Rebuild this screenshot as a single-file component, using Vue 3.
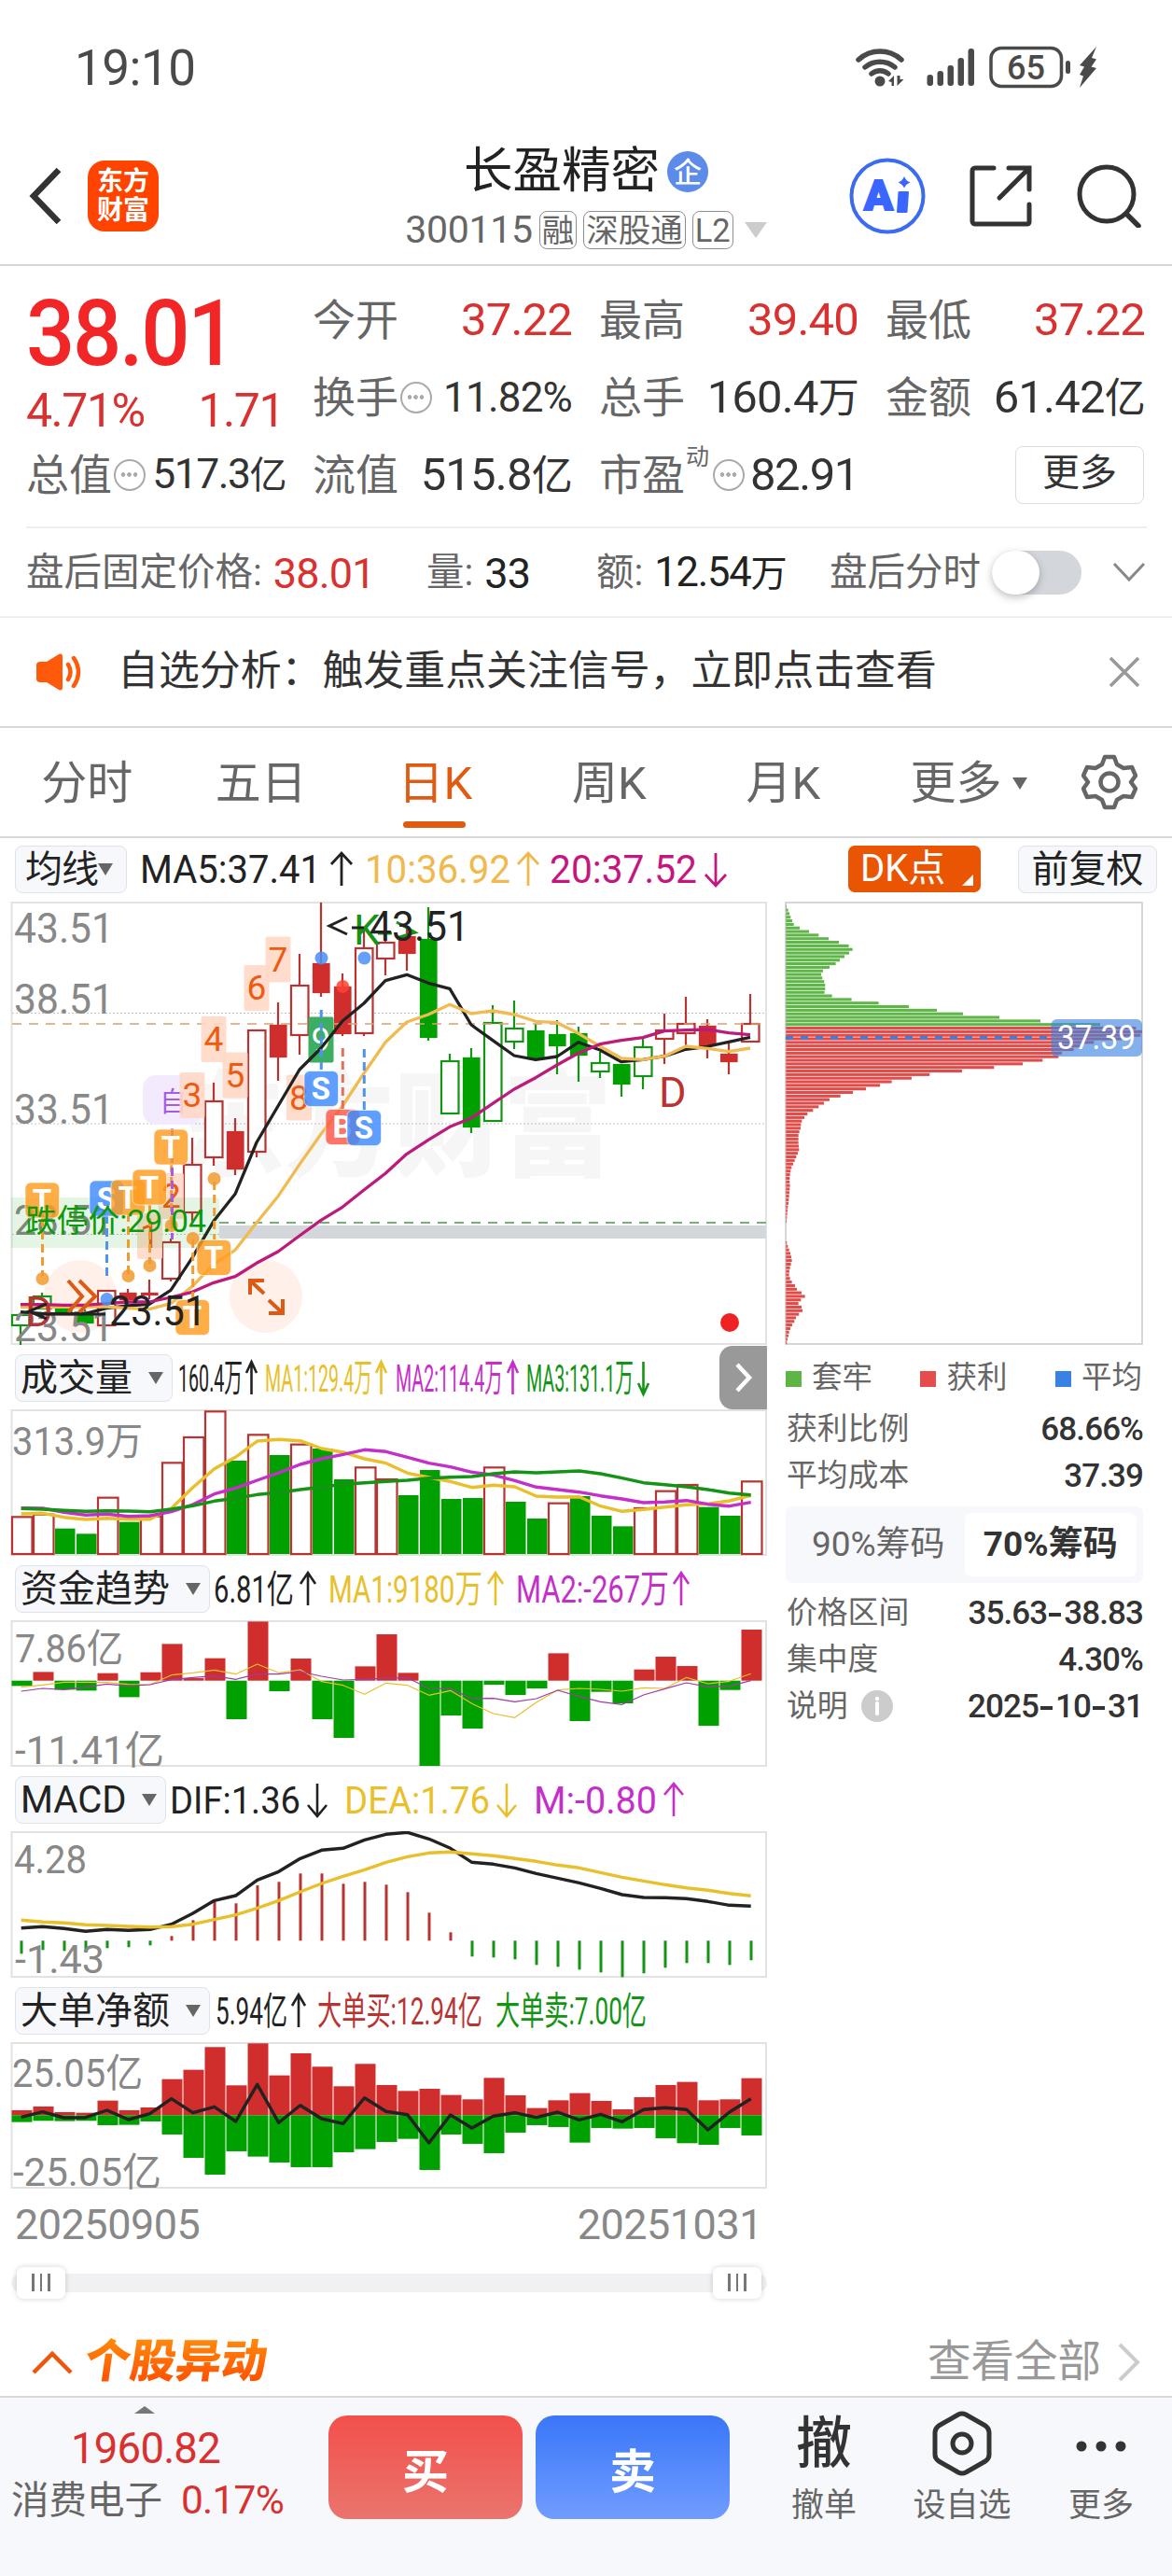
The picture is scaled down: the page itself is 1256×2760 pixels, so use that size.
<template>
  <div class="page">
    <div class="status">
      <span class="clock">19:10</span>
      <svg class="status-icons" viewBox="0 0 260 46" width="260" height="46">
        <g fill="none" stroke="#4a4a4a" stroke-width="5.5" stroke-linecap="round">
          <path d="M3 15a34 34 0 0 1 46 0" />
          <path d="M10 23a25 25 0 0 1 32 0" />
          <path d="M17 30a14 14 0 0 1 18 0" />
        </g>
        <circle cx="26" cy="38" r="5.5" fill="#4a4a4a" />
        <path d="M35 38l6-6v11h-2.500v-4zM44.500 32v11l7-7h-4v-4z" fill="#4a4a4a" />
        <g fill="#4a4a4a">
          <rect x="76.500" y="31" width="6.500" height="12" rx="3" />
          <rect x="87.500" y="27" width="6.500" height="16" rx="3" />
          <rect x="98.500" y="21" width="6.500" height="22" rx="3" />
          <rect x="109.500" y="13" width="6.500" height="30" rx="3" />
          <rect x="120.500" y="3" width="6.500" height="40" rx="3" />
        </g>
        <rect x="145" y="2.500" width="75.500" height="41" rx="11" fill="none" stroke="#4a4a4a" stroke-width="3.500" />
        <rect x="225" y="16" width="5" height="14" rx="2.500" fill="#4a4a4a" />
        <path d="M258 1l-18 20 5 1.500-5 8.500 4 1.500-4 12.500 18-21-5.500-1.500 5.500-8-5-1.500z" fill="#4a4a4a" />
        <text x="162" y="36" font-size="37" font-weight="500" fill="#4a4a4a" textLength="41" lengthAdjust="spacingAndGlyphs">65</text>
      </svg>
    </div>

    <header class="header">
      <div class="header-left">
        <svg width="36" height="64" viewBox="0 0 36 64"><path d="M32 4L5 32l27 28" fill="none" stroke="#333" stroke-width="6.500" /></svg>
        <div class="logo"><span>东方</span><span>财富</span></div>
      </div>
      <div class="header-title">
        <div class="name">长盈精密<span class="ent">企</span></div>
        <div class="code">
          <span class="num">300115</span>
          <span class="tag">融</span><span class="tag">深股通</span><span class="tag">L2</span>
          <i class="tri-down"></i>
        </div>
      </div>
      <div class="header-right">
        <svg width="82" height="82" viewBox="0 0 82 82">
          <circle cx="41" cy="41" r="38.500" fill="none" stroke="#3b6bf0" stroke-width="4" />
          <text x="16" y="56" font-size="45" font-weight="900" fill="#3a66ff" stroke="#3a66ff" stroke-width="2" textLength="31" lengthAdjust="spacingAndGlyphs">A</text>
          <path d="M53.500 37h9.500l-1.500 21h-9.500z" fill="#3a66ff" stroke="#3a66ff" stroke-width="2" stroke-linejoin="round" />
          <path d="M59 20q2 5 6.500 6.500q-4.500 1.500-6.500 6q-2-4.500-6.500-6q4.500-1.500 6.500-6.500z" fill="#3a66ff" />
        </svg>
        <svg width="68" height="66" viewBox="0 0 68 66">
          <path d="M26 3H6a3 3 0 0 0-3 3v54a3 3 0 0 0 3 3h56a2 2 0 0 0 2-2V42M42 3h22v23M63 4L32 35" fill="none" stroke="#333" stroke-width="5" stroke-linecap="round" />
        </svg>
        <svg width="70" height="68" viewBox="0 0 70 68">
          <circle cx="32" cy="32" r="29" fill="none" stroke="#333" stroke-width="5" />
          <path d="M53 53l13 13" stroke="#333" stroke-width="5.500" stroke-linecap="round" />
        </svg>
      </div>
    </header>

    <section class="quote">
      <div class="quote-col main-col">
        <div class="price"><span>38.01</span></div>
        <div class="change"><span>4.71%</span><span>1.71</span></div>
        <div class="cell"><label>总值</label><i class="more-dot"></i><b class="small">517.3<u>亿</u></b></div>
      </div>
      <div class="quote-col">
        <div class="cell"><label>今开</label><b class="red">37.22</b></div>
        <div class="cell"><label>换手</label><i class="more-dot"></i><b class="pct">11.82%</b></div>
        <div class="cell"><label>流值</label><b>515.8<u>亿</u></b></div>
      </div>
      <div class="quote-col">
        <div class="cell"><label>最高</label><b class="red">39.40</b></div>
        <div class="cell"><label>总手</label><b>160.4<u>万</u></b></div>
        <div class="cell"><label>市盈</label><sup>动</sup><i class="more-dot"></i><b class="pe">82.91</b></div>
      </div>
      <div class="quote-col">
        <div class="cell"><label>最低</label><b class="red">37.22</b></div>
        <div class="cell"><label>金额</label><b>61.42<u>亿</u></b></div>
        <div class="cell end"><button class="more-btn">更多</button></div>
      </div>
    </section>

    <section class="after">
      <div><label>盘后固定价格:</label><b class="red">38.01</b></div>
      <div><label>量:</label><b>33</b></div>
      <div><label>额:</label><b class="amount">12.54<u>万</u></b></div>
      <div><label>盘后分时</label></div>
      <div><span class="toggle"><i></i></span></div>
      <div><svg width="36" height="24" viewBox="0 0 36 24"><path d="M2 3l16 17L34 3" fill="none" stroke="#888" stroke-width="3" /></svg></div>
    </section>

    <section class="notice">
      <svg width="52" height="42" viewBox="0 0 52 42">
        <path d="M1 14a4 4 0 0 1 4-4h7L25 2q4-2 4 3v32q0 5-4 3l-13-8H5a4 4 0 0 1-4-4z" fill="#ff5a0a" />
        <path d="M35 13q5 8 0 16M41 6q10 15 0 30" fill="none" stroke="#ff5a0a" stroke-width="4.500" stroke-linecap="round" />
      </svg>
      <p>自选分析：触发重点关注信号，立即点击查看</p>
      <svg width="34" height="34" viewBox="0 0 34 34"><path d="M2 2l30 30M32 2L2 32" stroke="#999" stroke-width="3.500" /></svg>
    </section>

    <nav class="tabs">
      <span v-for="tab in tabs" :key="tab" class="tab" :class="{ active: tab === current }" @click="current = tab">{{ tab }}</span>
      <span class="tab tab-more">更多<i class="tri-small"></i></span>
      <svg width="60" height="60" viewBox="0 0 60 60" fill="none" stroke="#666" stroke-width="4.500" stroke-linejoin="round">
        <path d="M25 3h10l3 8 7 4 9-1 4 9-5 7 5 7-4 9-9-1-7 4-3 8H25l-3-8-7-4-9 1-4-9 5-7-5-7 4-9 9 1 7-4z" />
        <circle cx="30" cy="30" r="9.500" />
      </svg>
    </nav>

    <div class="ma-bar">
      <span class="pill ma-pill">均线<i class="tri-small"></i></span>
      <svg class="ma-text" width="640" height="50" viewBox="144 0 640 50">
        <g v-for="m in maLegend" :key="m.t">
          <text :x="m.x" y="40" font-size="42" :fill="m.c" :textLength="m.w" lengthAdjust="spacingAndGlyphs">{{ m.t }}</text>
          <path :d="arrow(m)" fill="none" :stroke="m.c" stroke-width="2.800" />
        </g>
      </svg>
      <span class="dk">DK点<i></i></span>
      <span class="pill fq">前复权</span>
    </div>

    <main class="board">
      <div class="charts">
        <svg class="kline" width="822" height="476" viewBox="0 16 822 476">
          <text x="188" y="300" font-size="122" font-weight="900" fill="#f6f6f6" textLength="468" lengthAdjust="spacingAndGlyphs">东方财富</text>
          <g stroke="#c4c4c4" stroke-width="1" stroke-dasharray="2 2">
            <path d="M13 135.500H821M13 254H821M13 372.500H821" />
          </g>
          <rect x="12.500" y="17" width="808.500" height="473" fill="none" stroke="#e2e2e2" stroke-width="2" />
          <rect x="235" y="363" width="586" height="14" fill="#d3d7dc" />
          <path d="M235 360H821" stroke="#77b077" stroke-width="2" stroke-dasharray="10 8" />
          <circle cx="86" cy="439" r="39" fill="#fff0e9" />
          <circle cx="285" cy="439" r="39" fill="#fff0e9" />
          <g v-for="(k, i) in candles" :key="i" :stroke="k[0] > 0 ? '#b83433' : '#149414'" stroke-width="2.200">
            <path :d="`M${cx(i)} ${k[2]}V${k[3]}M${cx(i)} ${k[4]}V${k[5]}`" />
            <rect
              :x="cx(i) - (k[1] ? 8 : 9)" :y="k[3]" :width="k[1] ? 16.500 : 18.500" :height="Math.max(k[4] - k[3], 1)"
              :fill="k[1] ? (k[0] > 0 ? '#cf2e2d' : '#00a000') : '#fff'" :stroke="k[1] ? (k[0] > 0 ? '#cf2e2d' : '#00a000') : undefined"
            />
          </g>
          <path d="M13 147H821" stroke="#d4a272" stroke-width="1.500" stroke-dasharray="10 8" />
          <g font-size="45" fill="#888">
            <text v-for="l in priceLabels" :key="l.t" x="15" :y="l.y" textLength="107" lengthAdjust="spacingAndGlyphs">{{ l.t }}</text>
          </g>
          <rect x="153" y="202" width="64" height="53" rx="14" fill="#f3eafe" />
          <text x="171" y="241" font-size="29" fill="#a35be8">自</text>
          <g v-for="n in counts" :key="n.t">
            <rect :x="n.x" :y="n.y" width="27" height="49" rx="2" :fill="n.t === '9' ? '#3cae62' : '#ffd8c7'" :fill-opacity="n.t === '9' ? 1 : .9" />
            <text :x="n.x + 13.500" :y="n.y + 37" text-anchor="middle" font-size="37" :fill="n.t === '9' ? '#fff' : '#ee5a10'">{{ n.t }}</text>
          </g>
          <g fill="none" stroke-width="3.300" stroke-linejoin="round">
            <polyline :points="line(ma5)" stroke="#222" />
            <polyline :points="line(ma10)" stroke="#f0bb50" />
            <polyline :points="line(ma20)" stroke="#bd1b7c" />
          </g>
          <path d="M12 333H231q4 0 4 4v46q0 4-4 4H12z" fill="#00a000" fill-opacity=".1" />
          <g stroke-width="3" stroke-dasharray="9 5">
            <path v-for="(s, i) in stems" :key="i" :d="`M${s[0]} ${s[1]}V${s[2]}`" :stroke="s[3]" />
          </g>
          <circle v-for="(d, i) in dots" :key="'d' + i" :cx="d[0]" :cy="d[1]" r="7" :fill="d[2]" fill-opacity=".85" />
          <g v-for="(m, i) in marks" :key="'m' + i">
            <rect :x="m.x" :y="m.y" width="36.500" height="38" rx="6" :fill="markColor[m.t]" fill-opacity=".82" stroke="#fff" stroke-opacity=".6" />
            <text :x="m.x + 18" :y="m.y + 30.500" text-anchor="middle" font-size="33" font-weight="700" fill="#fff">{{ m.t }}</text>
          </g>
          <text x="27" y="370" font-size="34" fill="#0a9a0a" textLength="194" lengthAdjust="spacingAndGlyphs">跌停价:29.04</text>
          <g fill="none" stroke="#dd5a14" stroke-width="4">
            <path d="M73 422l15 17-15 17M85 422l17 17-17 17" />
            <path d="M268 437v-15h15M268 422l15 14M303 442v15h-15M303 457l-15-14" />
          </g>
          <g font-size="45">
            <text x="27" y="471" fill="#b83433">D</text>
            <text x="706" y="236" fill="#b83433">D</text>
            <text x="379" y="62" fill="#149414">K</text>
            <text x="117" y="470" fill="#222" textLength="104" lengthAdjust="spacingAndGlyphs">23.51</text>
          </g>
          <path d="M425 55l20-6-20-11M405 50h15" fill="none" stroke="#149414" stroke-width="3" />
          <g fill="none" stroke="#222" stroke-width="3">
            <path d="M50 447l-19 8 19 8M45 458h68" />
            <path d="M372 33l-19 9 19 9M377 44h13" />
          </g>
          <text x="396" y="58" font-size="45" fill="#222" textLength="107" lengthAdjust="spacingAndGlyphs">43.51</text>
          <circle cx="782" cy="467" r="10" fill="#ee2222" />
        </svg>

        <template v-for="(p, pi) in panels" :key="p.name">
          <div class="panel-head">
            <span class="pill"><em>{{ p.name }}</em><i class="tri-mid"></i></span>
            <svg :width="760 - p.left" height="50" :viewBox="`${p.left} 0 ${760 - p.left} 50`">
              <g v-for="m in p.items" :key="m.t">
                <text :x="m.x" y="40" font-size="41" :fill="m.c" :textLength="m.w" lengthAdjust="spacingAndGlyphs">{{ m.t }}</text>
                <path v-if="m.a" :d="arrow(m)" fill="none" :stroke="m.c" stroke-width="2.600" />
              </g>
            </svg>
            <button v-if="pi === 0" class="drawer">
              <svg width="20" height="32" viewBox="0 0 20 32"><path d="M3 2l13 14L3 30" fill="none" stroke="#fff" stroke-width="4.500" /></svg>
            </button>
          </div>
          <svg class="panel" width="822" height="158" viewBox="0 0 822 158">
            <rect x="12.500" y="1" width="808.500" height="155" fill="none" stroke="#e2e2e2" stroke-width="2" />
            <g v-if="pi !== 2" font-size="42" fill="#888">
              <text v-for="l in p.labels" :key="l.t" :x="l.x" :y="l.y" :textLength="l.w" lengthAdjust="spacingAndGlyphs">{{ l.t }}</text>
            </g>
            <template v-if="pi === 0">
              <rect
                v-for="(v, i) in volumes" :key="i"
                :x="13 + 23 * i" :y="156 - Math.abs(v) / 3" width="21.500" :height="Math.abs(v) / 3 - 1"
                :fill="v > 0 ? '#fff' : '#00a000'" :stroke="v > 0 ? '#b83433' : 'none'" stroke-width="2.200"
              />
            </template>
            <template v-else-if="pi === 1">
              <rect
                v-for="(v, i) in funds" :key="i"
                :x="12.500 + 23 * i" :y="v > 0 ? 64.700 - v / 3 : 64.700" width="22" :height="Math.abs(v) / 3"
                :fill="v > 0 ? '#cf2e2d' : '#00a000'"
              />
            </template>
            <template v-else-if="pi === 2">
              <path
                v-for="(v, i) in macd" :key="i" :d="`M${23 + 23 * i} 117.300v${-v / 3}`"
                :stroke="v > 0 ? '#b83433' : '#149414'" stroke-width="3"
              />
            </template>
            <template v-else>
              <g v-for="(v, i) in buys" :key="i">
                <rect :x="12.500 + 23 * i" :y="78.300 - v / 3" width="22" :height="v / 3" fill="#cf2e2d" />
                <rect :x="12.500 + 23 * i" y="78.300" width="22" :height="sells[i] / 3" fill="#00a000" />
              </g>
            </template>
            <polyline
              v-for="(l, i) in p.lines" :key="i" :points="panelLine(l.d, p.base)"
              fill="none" :stroke="l.c" :stroke-width="p.stroke" stroke-linejoin="round"
            />
            <g v-if="pi === 2" font-size="42" fill="#888">
              <text v-for="l in p.labels" :key="l.t" :x="l.x" :y="l.y" :textLength="l.w" lengthAdjust="spacingAndGlyphs">{{ l.t }}</text>
            </g>
          </svg>
        </template>

        <div class="dates"><span>20250905</span><span>20251031</span></div>
        <div class="slider">
          <div class="track">
            <span class="handle"><i></i><i></i><i></i></span>
            <span class="handle"><i></i><i></i><i></i></span>
          </div>
        </div>
      </div>

      <aside class="chips">
        <svg width="384" height="476" viewBox="841 16 384 476">
          <rect x="842" y="17" width="382" height="473" fill="#fff" stroke="#c9c9c9" stroke-width="1.500" />
          <rect
            v-for="(w, i) in chipBars" :key="i" x="842.300" :y="19.700 + i * chipStep" :width="w / 3" height="3.100"
            :fill="i < 34 ? '#5fb548' : '#e04c4a'"
          />
          <path d="M842 162H1124" stroke="#5078c8" stroke-width="4" stroke-dasharray="8 8" />
          <rect x="1126.500" y="142" width="97.500" height="40" rx="6" fill="#3c84e0" fill-opacity=".63" />
          <text x="1133" y="174" font-size="36" fill="#fff" textLength="84" lengthAdjust="spacingAndGlyphs">37.39</text>
        </svg>
        <div class="legend">
          <span><i class="g"></i>套牢</span><span><i class="r"></i>获利</span><span><i class="b"></i>平均</span>
        </div>
        <div class="row"><span>获利比例</span><b>68.66%</b></div>
        <div class="row"><span>平均成本</span><b>37.39</b></div>
        <div class="seg">
          <span :class="{ on: ratio === 90 }" @click="ratio = 90">90%筹码</span>
          <span :class="{ on: ratio === 70 }" @click="ratio = 70">70%筹码</span>
        </div>
        <div class="row"><span>价格区间</span><b>35.63<s></s>38.83</b></div>
        <div class="row"><span>集中度</span><b>4.30%</b></div>
        <div class="row"><span>说明<svg width="34" height="34" viewBox="0 0 34 34"><circle cx="17" cy="17" r="17" fill="#ccc" /><circle cx="17" cy="9" r="2.200" fill="#fff" /><path d="M17 14v11" stroke="#fff" stroke-width="4" stroke-linecap="round" /></svg></span><b>2025<s></s>10<s></s>31</b></div>
      </aside>
    </main>

    <section class="moves">
      <svg width="44" height="28" viewBox="0 0 44 28"><path d="M2 25L22 5l20 20" fill="none" stroke="#e8590c" stroke-width="4.500" /></svg>
      <h3>个股异动</h3>
      <span class="all">查看全部</span>
      <svg width="24" height="42" viewBox="0 0 24 42"><path d="M2 2l19 19L2 40" fill="none" stroke="#ccc" stroke-width="4" /></svg>
    </section>

    <footer class="bottom">
      <div class="sector">
        <i class="tri-up"></i>
        <div class="idx">1960.82</div>
        <div class="sec"><span>消费电子</span><b>0.17%</b></div>
      </div>
      <button class="trade buy">买</button>
      <button class="trade sell">卖</button>
      <div class="tool"><strong>撤</strong><span>撤单</span></div>
      <div class="tool wide">
        <svg width="64" height="70" viewBox="0 0 64 70" fill="none" stroke="#333" stroke-width="5" stroke-linejoin="round">
          <path d="M28 4q4-2 8 0l21 12q4 3 4 7v24q0 4-4 7L36 66q-4 2-8 0L7 54q-4-3-4-7V23q0-4 4-7z" />
          <circle cx="32" cy="35" r="10" />
        </svg>
        <span>设自选</span>
      </div>
      <div class="tool last">
        <svg width="64" height="70" viewBox="0 0 64 70" fill="#333"><circle cx="11" cy="38" r="5.500" /><circle cx="32" cy="38" r="5.500" /><circle cx="53" cy="38" r="5.500" /></svg>
        <span>更多</span>
      </div>
    </footer>
  </div>
</template>

<script setup>
import { ref } from 'vue'

const tabs = ['分时', '五日', '日K', '周K', '月K']
const current = ref('日K')
const ratio = ref(70)

// x / w: text start and width, a: arrow direction, ax / aw: arrow start and width
const maLegend = [
  { t: 'MA5:37.41', x: 150, w: 194, c: '#222', a: 'up', ax: 355, aw: 22 },
  { t: '10:36.92', x: 391, w: 156, c: '#f0b94e', a: 'up', ax: 555, aw: 22 },
  { t: '20:37.52', x: 589, w: 158, c: '#c3177f', a: 'down', ax: 756, aw: 22 }
]

const arrow = (m) => {
  const mid = m.ax + m.aw / 2
  const half = m.aw / 2
  return m.a === 'up'
    ? `M${mid} 43V9M${mid - half} 20L${mid} 8l${half} 12`
    : `M${mid} 8V42M${mid - half} 31L${mid} 43l${half} -12`
}

const cx = (i) => 22 + 23 * i
const line = (arr) => arr.map((y, i) => `${cx(i)},${(y / 3).toFixed(1)}`).join(' ')
const panelLine = (arr, base) => arr.map((y, i) => `${22.7 + 23 * i},${((y - base) / 3 + 1).toFixed(1)}`).join(' ')

const priceLabels = [
  { t: '43.51', y: 60 },
  { t: '38.51', y: 136 },
  { t: '33.51', y: 254 },
  { t: '28.51', y: 373 },
  { t: '23.51', y: 487 }
]

// direction, filled, high, top, bottom, low
const candles = [
  [-1, 0, 459, 459, 470, 491], [-1, 0, 435, 439, 452, 452], [-1, 1, 452, 452, 457, 457], [-1, 1, 453, 460, 467, 467],
  [1, 0, 433, 433, 470, 470], [1, 1, 431, 436, 442, 442], [1, 1, 421, 436, 436, 442], [1, 0, 377, 381, 420, 423],
  [1, 0, 269, 298, 349, 360], [1, 0, 210, 230, 290, 299], [1, 1, 248, 263, 302, 309], [1, 0, 154, 154, 284, 290],
  [1, 1, 124, 149, 182, 208], [1, 0, 72, 106, 159, 180], [1, 1, 17, 83, 113, 118], [1, 1, 93, 108, 157, 160],
  [1, 0, 47, 66, 157, 160], [1, 0, 57, 60, 77, 95], [1, 1, 43, 54, 71, 90], [-1, 1, 22, 57, 161, 165],
  [-1, 0, 179, 187, 243, 243], [-1, 1, 173, 184, 257, 264], [-1, 0, 127, 146, 251, 251], [-1, 0, 122, 152, 166, 174],
  [-1, 1, 147, 155, 184, 187], [-1, 1, 143, 159, 170, 201], [-1, 1, 150, 158, 180, 209], [-1, 0, 177, 189, 198, 205],
  [-1, 1, 190, 191, 211, 225], [-1, 0, 162, 172, 203, 217], [1, 0, 136, 154, 163, 190], [1, 0, 118, 147, 157, 172],
  [1, 1, 142, 150, 170, 184], [1, 1, 166, 180, 187, 201], [1, 0, 115, 147, 166, 166]
]

const ma5 = [1367, 1372, 1373, 1373, 1355, 1347, 1342, 1297, 1193, 1075, 988, 822, 705, 588, 519, 432, 375, 302, 283, 310, 328, 444, 494, 543, 556, 546, 500, 525, 563, 556, 545, 523, 514, 499, 484]
const ma10 = [1352, 1352, 1351, 1350, 1350, 1355, 1358, 1340, 1285, 1213, 1168, 1080, 995, 893, 795, 705, 600, 500, 435, 411, 379, 408, 399, 411, 433, 437, 472, 513, 552, 556, 545, 513, 520, 530, 519]
const ma20 = [1343, 1343, 1345, 1345, 1340, 1335, 1335, 1320, 1303, 1273, 1253, 1210, 1173, 1122, 1072, 1030, 975, 922, 859, 814, 772, 744, 697, 651, 614, 573, 535, 506, 494, 485, 464, 461, 459, 470, 476]

const counts = [
  { t: '1', x: 147, y: 350 }, { t: '2', x: 170, y: 307 }, { t: '3', x: 192.5, y: 199 }, { t: '4', x: 215.5, y: 139 },
  { t: '5', x: 238.5, y: 177.5 }, { t: '6', x: 261.5, y: 84 }, { t: '7', x: 284.5, y: 53.5 }, { t: '8', x: 307, y: 201.5 },
  { t: '9', x: 330.5, y: 139.5 }
]

const orange = '#f29a2e'
const blue = '#4f92f0'
const stems = [
  [45.5, 355, 417, orange], [114.5, 352, 418, blue], [137.5, 350, 415, orange], [160.5, 341, 404, orange],
  [183.7, 297, 362, orange], [184.5, 259, 378, '#a35be8'], [206.7, 378, 442, orange], [229.7, 316, 378, orange],
  [344.3, 132, 196, blue], [367.3, 173, 238, '#e2705f'], [390.3, 174, 239, blue]
]
const dots = [
  [45.5, 420, orange], [137.5, 417, orange], [160.5, 406, orange], [183.7, 363, orange], [206.7, 377, orange], [229.5, 313, orange],
  [344.5, 76.5, '#4a8ff5'], [390.5, 76.5, '#4a8ff5'], [114.5, 442, '#4a8ff5'], [367.3, 107, '#fb4333']
]
const markColor = { T: '#ff9c1f', S: '#3b8aff', B: '#ff5544' }
const marks = [
  { t: 'T', x: 27, y: 317 }, { t: 'S', x: 96, y: 315 }, { t: 'T', x: 119, y: 314 }, { t: 'T', x: 142, y: 303 },
  { t: 'T', x: 165, y: 260 }, { t: 'T', x: 211, y: 378.5 }, { t: 'T', x: 188, y: 442.5 },
  { t: 'S', x: 326, y: 197.5 }, { t: 'B', x: 349, y: 238.5 }, { t: 'S', x: 372, y: 239.5 }
]

const volumes = [122, 130, -85, -68, 184, -106, 124, 296, 378, 461, -303, 386, -321, 355, -342, -243, 281, 243, -192, -273, -180, -183, 281, -171, -117, 166, -189, -126, -92, 150, 205, 225, -154, -126, 236]
const funds = [-17, 28, -29, -32, 24, -53, 27, 118, 8, 72, -124, 190, -34, 71, -124, -184, 46, 149, 25, -274, -112, -154, -13, -46, -25, 88, -130, -36, -73, 36, 77, 47, -145, -30, 164]
const macd = [-42, -30, -33, -38, -24, -21, -15, 15, 66, 125, 120, 178, 189, 216, 216, 183, 189, 180, 156, 90, 27, -51, -54, -60, -78, -84, -93, -102, -117, -105, -87, -72, -72, -78, -63]
const buys = [16, 28, 10, 8, 47, 16, 25, 116, 146, 219, 96, 231, 128, 199, 156, 93, 165, 97, 78, 85, 65, 51, 120, 64, 23, 48, 71, 46, 19, 58, 97, 107, 48, 51, 119]
const sells = [22, 18, 19, 18, 32, 31, 20, 62, 137, 191, 116, 133, 152, 167, 167, 119, 109, 86, 76, 176, 62, 92, 122, 56, 32, 38, 88, 41, 43, 41, 74, 90, 95, 41, 65]

const yellow = '#e9bf2c'
const purple = '#c52fc9'
const green = '#149414'
const panels = [
  {
    name: '成交量',
    left: 184,
    base: 212,
    stroke: 3.4,
    items: [
      { t: '160.4万', x: 190, w: 69, c: '#222', a: 'up', ax: 263, aw: 11 },
      { t: 'MA1:129.4万', x: 283, w: 115, c: yellow, a: 'up', ax: 402, aw: 11 },
      { t: 'MA2:114.4万', x: 423, w: 115, c: purple, a: 'up', ax: 543, aw: 11 },
      { t: 'MA3:131.1万', x: 563, w: 115, c: green, a: 'down', ax: 683, aw: 11 }
    ],
    labels: [{ t: '313.9万', x: 13, y: 49, w: 140 }],
    lines: [
      { c: yellow, d: [545, 543, 556, 563, 559, 562, 562, 527, 460, 400, 362, 311, 306, 310, 335, 347, 368, 382, 414, 428, 441, 460, 453, 458, 488, 491, 490, 520, 537, 531, 523, 516, 513, 503, 486] },
      { c: purple, d: [526, 527, 540, 549, 546, 553, 551, 538, 515, 481, 462, 437, 413, 386, 368, 354, 339, 345, 363, 382, 394, 411, 420, 438, 459, 467, 475, 487, 497, 509, 507, 502, 514, 520, 508] },
      { c: green, d: [528, 530, 534, 537, 535, 536, 538, 530, 519, 504, 495, 483, 477, 467, 459, 450, 445, 441, 437, 430, 427, 425, 416, 410, 413, 410, 407, 416, 430, 445, 451, 458, 467, 478, 484] }
    ]
  },
  {
    name: '资金趋势',
    left: 224,
    base: 890,
    stroke: 1.2,
    items: [
      { t: '6.81亿', x: 228, w: 86, c: '#222', a: 'up', ax: 321, aw: 16 },
      { t: 'MA1:9180万', x: 351, w: 165, c: yellow, a: 'up', ax: 522, aw: 16 },
      { t: 'MA2:-267万', x: 552, w: 164, c: purple, a: 'up', ax: 721, aw: 16 }
    ],
    labels: [{ t: '7.86亿', x: 16, y: 45, w: 116 }, { t: '-11.41亿', x: 16, y: 154, w: 160 }],
    lines: [
      { c: yellow, d: [1102, 1095, 1086, 1086, 1087, 1093, 1094, 1063, 1056, 1047, 1060, 1028, 1056, 1046, 1084, 1096, 1125, 1089, 1096, 1128, 1113, 1155, 1187, 1200, 1151, 1111, 1106, 1109, 1115, 1104, 1106, 1071, 1091, 1083, 1059] },
      { c: '#a03aa8', d: [1115, 1106, 1110, 1102, 1092, 1098, 1094, 1078, 1071, 1066, 1077, 1060, 1060, 1052, 1067, 1079, 1077, 1073, 1072, 1106, 1107, 1139, 1138, 1149, 1139, 1112, 1132, 1149, 1158, 1127, 1107, 1088, 1101, 1099, 1081] }
    ]
  },
  {
    name: 'MACD',
    left: 180,
    base: 188,
    stroke: 3.4,
    items: [
      { t: 'DIF:1.36', x: 184, w: 140, c: '#222', a: 'down', ax: 332, aw: 20 },
      { t: 'DEA:1.76', x: 371, w: 156, c: yellow, a: 'down', ax: 535, aw: 20 },
      { t: 'M:-0.80', x: 574, w: 132, c: purple, a: 'up', ax: 714, aw: 20 }
    ],
    labels: [{ t: '4.28', x: 15, y: 45, w: 78 }, { t: '-1.43', x: 16, y: 152, w: 96 }],
    lines: [
      { c: '#222', d: [496, 492, 498, 507, 501, 504, 501, 484, 449, 408, 392, 342, 315, 273, 246, 240, 213, 195, 189, 210, 240, 285, 291, 303, 321, 336, 351, 369, 389, 398, 399, 402, 411, 423, 426] },
      { c: yellow, d: [471, 477, 480, 486, 488, 491, 493, 492, 484, 469, 454, 432, 408, 380, 353, 330, 309, 285, 267, 255, 252, 258, 264, 273, 282, 294, 303, 318, 333, 345, 357, 367, 375, 385, 393] }
    ]
  },
  {
    name: '大单净额',
    left: 224,
    base: 867,
    stroke: 3.4,
    items: [
      { t: '5.94亿', x: 230, w: 77, c: '#222', a: 'up', ax: 312, aw: 14 },
      { t: '大单买:12.94亿', x: 339, w: 177, c: '#b83433' },
      { t: '大单卖:7.00亿', x: 530, w: 162, c: green }
    ],
    labels: [{ t: '25.05亿', x: 13, y: 48, w: 140 }, { t: '-25.05亿', x: 14, y: 154, w: 159 }],
    lines: [
      { c: '#222', d: [1105, 1088, 1107, 1106, 1083, 1113, 1094, 1046, 1091, 1072, 1119, 1000, 1123, 1067, 1110, 1126, 1043, 1087, 1097, 1188, 1098, 1140, 1102, 1091, 1106, 1089, 1114, 1096, 1120, 1081, 1075, 1081, 1146, 1089, 1046] }
    ]
  }
]

// chip distribution, top price first
const chipBars = [
  2, 7, 11, 15, 20, 25, 44, 74, 105, 137, 170, 202, 214, 203, 188, 173, 160, 140, 119, 113, 117, 123, 126, 126, 124, 148, 211, 298, 395, 485, 569, 686, 818, 1010,
  1125, 1145, 1140, 1080, 990, 950, 925, 887, 876, 825, 761, 669, 566, 462, 404, 340, 302, 257, 215, 175, 140, 122, 105, 87, 69, 59, 51, 48, 47, 43, 40, 40, 40, 41, 42, 38, 33, 28, 23, 18, 15, 13, 12, 12, 13, 12, 11, 10, 9, 8, 6, 5, 4, 3, 2,
  0, 0, 0, 0, 0, 3, 6, 10, 14, 17, 19, 16, 13, 11, 10, 13, 19, 29, 35, 50, 61, 48, 40, 50, 53, 42, 32, 27, 20, 14, 10, 8, 5, 3
]
const chipStep = 467.5 / (chipBars.length - 1)
</script>

<style>
body {
  background: #fff;
}
</style>

<style scoped>
.page {
  width: 1256px;
  height: 2760px;
  display: flex;
  flex-direction: column;
  overflow: hidden;
  background: #fff;
  color: #222;
  font-family: Roboto, "Noto Sans CJK SC", sans-serif;
  line-height: 1;
}
.page * {
  box-sizing: border-box;
}
svg {
  display: block;
  flex: none;
}
button {
  font-family: inherit;
  padding: 0;
  border: 0;
}
b, em, i, u, s {
  font-style: normal;
  font-weight: 400;
  text-decoration: none;
}
.red {
  color: #d93030 !important;
}

.status {
  height: 146px;
  flex: none;
  display: flex;
  align-items: center;
  justify-content: space-between;
  padding: 0 79px 2px 80px;
  color: #4a4a4a;
}
.clock {
  font-size: 53px;
  letter-spacing: -.5px;
  padding-top: 3px;
}

.header {
  height: 139px;
  flex: none;
  display: grid;
  grid-template-columns: 400px 1fr 400px;
  align-items: center;
  padding-bottom: 10px;
  border-bottom: 2px solid #d8d8d8;
}
.header-left {
  display: flex;
  align-items: center;
  gap: 27px;
  padding-left: 31px;
}
.logo {
  width: 76px;
  height: 76px;
  border-radius: 18px;
  background: #ff4400;
  color: #fff;
  display: flex;
  flex-direction: column;
  align-items: center;
  justify-content: center;
  gap: 3px;
  font-size: 28px;
  font-weight: 700;
  padding-top: 2px;
}
.header-title {
  display: flex;
  flex-direction: column;
  align-items: center;
  gap: 16px;
  padding-top: 5px;
}
.name {
  display: flex;
  align-items: center;
  gap: 8px;
  height: 52px;
  font-size: 52.5px;
}
.ent {
  width: 44px;
  height: 44px;
  border-radius: 50%;
  background: #5c8be9;
  color: #fff;
  font-size: 30px;
  font-weight: 500;
  line-height: 46px;
  text-align: center;
}
.code {
  display: flex;
  align-items: center;
  color: #666;
}
.code .num {
  font-size: 41px;
  letter-spacing: -.3px;
  margin-right: 7px;
}
.tag {
  height: 41px;
  border: 1.5px solid #8f8f8f;
  border-radius: 8px;
  font-size: 34.5px;
  line-height: 40px;
  padding: 0 2px;
  margin-right: 7px;
}
.tri-down {
  margin-left: 5px;
  border: 12px solid transparent;
  border-top: 17px solid #ccc;
  border-bottom: 0;
}
.header-right {
  display: flex;
  align-items: center;
  gap: 47px;
  padding-left: 54px;
}

.quote {
  flex: none;
  height: 281px;
  display: grid;
  grid-template-columns: repeat(4, 277px);
  column-gap: 30px;
  padding-top: 16px;
  margin: 0 27px 0 28px;
  border-bottom: 2px solid #eee;
}
.cell {
  height: 83px;
  display: flex;
  align-items: center;
}
.cell.end {
  justify-content: flex-end;
}
.cell label {
  font-size: 46px;
  color: #666;
  flex: none;
}
.cell b {
  margin: 0 -1px 0 auto;
  font-size: 49px;
  letter-spacing: -.8px;
  color: #333;
  white-space: nowrap;
}
.cell b.small {
  font-size: 44.5px;
  letter-spacing: -1.5px;
}
.cell b.pct {
  font-size: 44px;
  letter-spacing: -.8px;
}
.cell b.pe {
  letter-spacing: -1.4px;
}
u {
  font-size: .9em;
}
.more-dot {
  width: 34px;
  height: 34px;
  flex: none;
  margin-left: 2px;
  border: 2.5px solid #aaa;
  border-radius: 50%;
  background:
    radial-gradient(circle at 8px 14.5px, #aaa 2px, transparent 2.6px),
    radial-gradient(circle at 14.5px 14.5px, #aaa 2px, transparent 2.6px),
    radial-gradient(circle at 21px 14.5px, #aaa 2px, transparent 2.6px);
}
sup {
  font-size: 25px;
  color: #666;
  align-self: flex-start;
  padding-top: 10px;
  margin: 0 2px 0 1px;
}
.price {
  height: 111px;
  display: flex;
  align-items: center;
  font-size: 99px;
  font-weight: 500;
  color: #f22626;
}
.price span {
  letter-spacing: -2.5px;
  padding-top: 2px;
  transform: scaleX(.93);
  transform-origin: left;
}
.change {
  height: 55px;
  display: flex;
  align-items: center;
  justify-content: space-between;
  font-size: 50px;
  letter-spacing: -1.5px;
  padding-right: 1px;
  color: #d93030;
}
.more-btn {
  width: 138px;
  height: 62px;
  border: 1.5px solid #ddd;
  border-radius: 8px;
  background: #fff;
  font-size: 40px;
  line-height: 54px;
  padding-bottom: 4px;
  color: #333;
}

.after {
  flex: none;
  height: 96px;
  display: grid;
  grid-template-columns: 429px 182px 250px 174px 129px 40px;
  align-items: center;
  padding-left: 28px;
  border-bottom: 2px solid #eee;
}
.after > div {
  display: flex;
  align-items: center;
  white-space: nowrap;
}
.after label {
  font-size: 40.5px;
  color: #666;
}
.after b {
  margin: 2px 0 0 12px;
  font-size: 45px;
  letter-spacing: -.8px;
}
.after b.amount {
  font-size: 43.5px;
  letter-spacing: -1.2px;
}
.toggle {
  width: 96px;
  height: 47px;
  border-radius: 24px;
  background: #d3d7dc;
}
.toggle i {
  display: block;
  width: 51px;
  height: 47px;
  border-radius: 24px;
  background: #fff;
  box-shadow: 0 3px 8px rgba(0, 0, 0, .25);
}

.notice {
  flex: none;
  height: 118px;
  display: flex;
  align-items: center;
  padding: 0 34px 0 38px;
  border-bottom: 2px solid #d8d8d8;
}
.notice p {
  flex: 1;
  margin: 0 0 0 36px;
  font-size: 43.9px;
  color: #333;
}

.tabs {
  flex: none;
  height: 118px;
  display: flex;
  align-items: center;
  border-bottom: 2px solid #d8d8d8;
}
.tab {
  width: 186.5px;
  height: 116px;
  line-height: 120px;
  text-align: center;
  font-size: 49px;
  color: #666;
  position: relative;
}
.tab.active {
  color: #e05a12;
}
.tab.active::after {
  content: "";
  position: absolute;
  left: 59px;
  bottom: 9px;
  width: 67px;
  height: 7px;
  border-radius: 4px;
  background: #e05a12;
}
.tab-more {
  width: 226px;
  padding-right: 15px;
}
.tabs > svg {
  margin-left: 0;
}
.tri-small, .tri-mid {
  display: inline-block;
  border: 8.5px solid transparent;
  border-top: 13px solid #666;
  border-bottom: 0;
  vertical-align: middle;
}
.tab-more .tri-small {
  margin: 0 0 8px 11px;
}

.ma-bar {
  flex: none;
  height: 68px;
  display: flex;
  align-items: flex-start;
  padding: 8px 16px 0;
}
.pill {
  flex: none;
  height: 51px;
  display: flex;
  align-items: center;
  border: 1.5px solid #dfe2e8;
  border-radius: 8px;
  background: #f7f8fb;
  font-size: 40px;
}
.ma-pill {
  width: 120px;
  padding-left: 10px;
  letter-spacing: -1px;
}
.ma-text {
  margin-left: 8px;
}
.dk {
  position: relative;
  width: 142px;
  height: 50px;
  margin-left: 125px;
  padding-left: 13px;
  border-radius: 7px;
  background: #ea5504;
  color: #fff;
  font-size: 40px;
  line-height: 49px;
}
.dk i {
  position: absolute;
  right: 8px;
  bottom: 7px;
  border-left: 12px solid transparent;
  border-bottom: 12px solid #fff;
}
.fq {
  width: 149px;
  margin-left: 40px;
  justify-content: center;
}

.board {
  flex: none;
  height: 1504px;
  display: flex;
}
.charts {
  width: 841px;
}
.panel-head {
  height: 68px;
  display: flex;
  align-items: flex-start;
  padding: 9px 0 0 16px;
  position: relative;
}
.panel-head .pill {
  padding: 0 9px 0 5px;
}
.panel-head em {
  margin-right: 17px;
}
.drawer {
  position: absolute;
  left: 771px;
  top: 0;
  width: 51px;
  height: 68px;
  display: flex;
  align-items: center;
  justify-content: center;
  border-radius: 14px 0 0 14px;
  background: #999;
}
.dates {
  width: 822px;
  height: 75px;
  display: flex;
  align-items: center;
  justify-content: space-between;
  padding: 0 5px 0 16px;
  font-size: 45px;
  letter-spacing: -.5px;
  color: #888;
}
.slider {
  width: 822px;
  height: 49px;
  display: flex;
  align-items: center;
  padding-left: 12px;
}
.track {
  flex: 1;
  height: 20px;
  display: flex;
  align-items: center;
  justify-content: space-between;
  padding: 0 6px;
  border-radius: 10px;
  background: #f1f1f4;
}
.handle {
  width: 52px;
  height: 34px;
  display: flex;
  align-items: center;
  justify-content: center;
  gap: 6px;
  border-radius: 7px;
  background: #fff;
  box-shadow: 0 0 6px rgba(0, 0, 0, .18);
}
.handle i {
  width: 2.5px;
  height: 19px;
  background: #777;
}

.chips {
  width: 384px;
}
.legend {
  display: flex;
  justify-content: space-between;
  align-items: center;
  height: 64px;
  padding: 4px 1px 0 1px;
  font-size: 32.5px;
  color: #666;
}
.legend span {
  display: flex;
  align-items: center;
}
.legend i {
  width: 17px;
  height: 17px;
  margin: 3px 11px 0 0;
}
.legend .g { background: #5db544; }
.legend .r { background: #e64c4c; }
.legend .b { background: #3782e4; }
.row {
  height: 50px;
  display: flex;
  align-items: center;
  justify-content: space-between;
  padding-left: 2px;
  font-size: 32.8px;
  color: #666;
}
.row span {
  display: flex;
  align-items: center;
}
.row span svg {
  margin-left: 14px;
}
.row b {
  display: flex;
  align-items: center;
  font-size: 35px;
  font-weight: 500;
  letter-spacing: -.9px;
  color: #333;
}
.row s {
  width: 13px;
  height: 3.5px;
  margin: 4px 3px 0 2px;
  background: #333;
}
.seg {
  display: flex;
  height: 82px;
  margin: 8px 0 7px 1px;
  padding: 7px;
  border-radius: 7px;
  background: #f7f8fb;
  font-size: 37px;
  line-height: 68px;
  color: #666;
  text-align: center;
}
.seg span {
  flex: 1;
  border-radius: 7px;
  white-space: nowrap;
}
.seg .on {
  background: #fff;
  color: #333;
  font-weight: 700;
}

.moves {
  flex: none;
  height: 97px;
  display: flex;
  align-items: center;
  padding: 24px 34px 0 34px;
}
.moves h3 {
  margin: 0 auto 0 13px;
  padding: 2px 6px 2px 0;
  font-size: 49px;
  font-weight: 900;
  letter-spacing: -.2px;
  transform: skewX(-8deg);
  background: linear-gradient(#ff8c0c, #ff4a00);
  -webkit-background-clip: text;
  background-clip: text;
  color: transparent;
}
.all {
  font-size: 46.5px;
  color: #999;
  margin-right: 18px;
}

.bottom {
  flex: 1;
  display: flex;
  align-items: flex-start;
  border-top: 2px solid #d8d8d8;
  background: #f7f8fb;
}
.sector {
  width: 352px;
  padding-top: 9px;
}
.tri-up {
  display: block;
  width: 0;
  margin-left: 144px;
  border: 11.5px solid transparent;
  border-bottom: 8px solid #777;
  border-top: 0;
}
.idx {
  width: 312px;
  margin-top: 15px;
  text-align: center;
  font-size: 45.5px;
  letter-spacing: -.8px;
  color: #d93030;
}
.sec {
  display: flex;
  align-items: center;
  margin-top: 11px;
  padding-left: 12px;
  font-size: 40.5px;
  color: #666;
}
.sec b {
  margin-left: 20px;
  font-size: 42.5px;
  letter-spacing: -.8px;
  color: #d93030;
}
.trade {
  width: 208px;
  height: 111px;
  margin: 19px 14px 0 0;
  border-radius: 20px;
  color: #fff;
  font-size: 50px;
  font-weight: 700;
}
.buy {
  background: linear-gradient(#f3504a, #ea746e);
}
.sell {
  background: linear-gradient(#3a76f8, #709cff);
}
.tool {
  width: 120px;
  margin: 14px 0 0 27px;
  display: flex;
  flex-direction: column;
  align-items: center;
  font-size: 35px;
  color: #666;
}
.tool strong {
  height: 70px;
  font-size: 60px;
  font-weight: 500;
  line-height: 72px;
  color: #333;
}
.tool span {
  margin-top: 14px;
}
.tool.wide {
  margin-left: 28px;
}
.tool.last {
  margin-left: 29px;
}
</style>
